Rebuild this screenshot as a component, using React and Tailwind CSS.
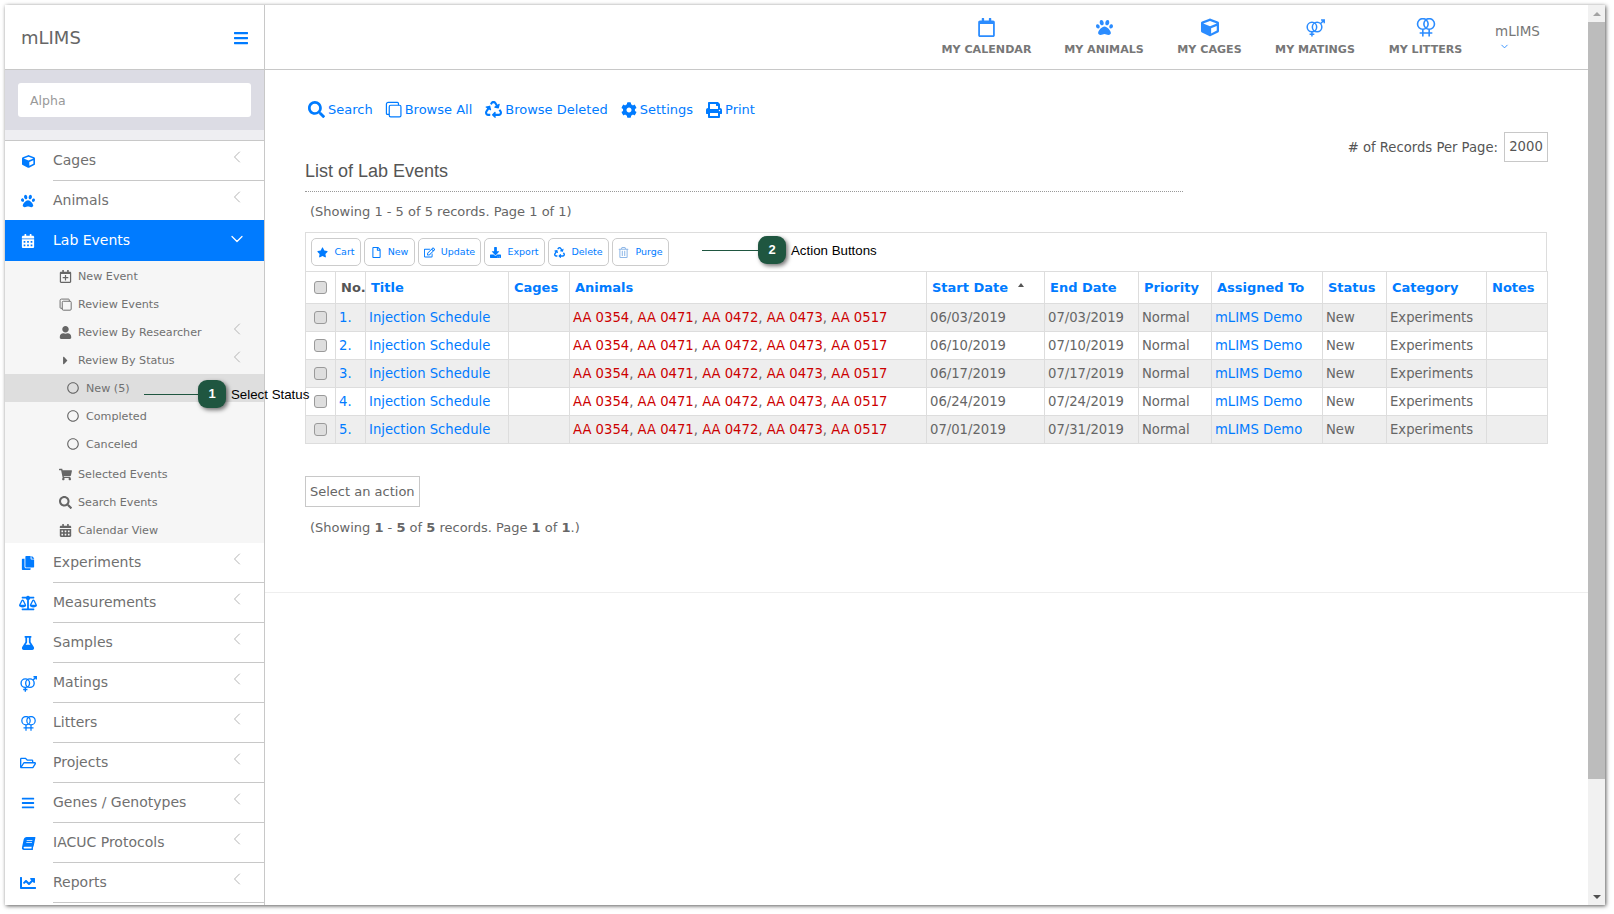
import React from 'react';
import { ChevronLeft, ChevronDown } from 'lucide-react';
import {
  FaBars, FaBalanceScale, FaBook, FaCalendarAlt, FaChartLine, FaCog, FaCopy, FaCube, FaDownload, FaFlask,
  FaPaw, FaPrint, FaRecycle, FaRegCalendar, FaRegCalendarPlus, FaRegCircle, FaRegEdit, FaRegFile,
  FaRegFolderOpen, FaRegTrashAlt, FaSearch, FaShoppingCart, FaStar, FaUser, FaCaretRight,
} from 'react-icons/fa';

const body = { fontFamily: '"DejaVu Sans", sans-serif' };
const arial = { fontFamily: '"Liberation Sans", sans-serif' };

// font-awesome 4 glyphs that the icon packages no longer carry in this shape
const MatingIcon = ({ size = 16, className }) => (
  <svg width={size} height={size} viewBox="0 0 24 24" fill="none" stroke="currentColor" strokeWidth="1.9" className={className}>
    <circle cx="7.5" cy="11.5" r="6" />
    <circle cx="14" cy="11.5" r="6" />
    <path d="M7.5 17.5V23.5M4.5 20.5H10.5M18.5 7L23 2.5M19 2.5H23V6.5" />
  </svg>
);

const LitterIcon = ({ size = 16, className }) => (
  <svg width={size} height={size} viewBox="0 0 24 24" fill="none" stroke="currentColor" strokeWidth="2" className={className}>
    <circle cx="8" cy="7.5" r="6.7" />
    <circle cx="16" cy="7.5" r="6.7" />
    <path d="M8 14.2V23.5M16 14.2V23.5M4 19H20" />
  </svg>
);

const FilesIcon = ({ size = 16, className }) => (
  <svg width={size} height={size} viewBox="0 0 24 24" fill="none" stroke="currentColor" strokeWidth="1.7" className={className}>
    <path d="M6 19H3.5A1.5 1.5 0 0 1 2 17.5V4.5A2.5 2.5 0 0 1 4.5 2H17.5A1.5 1.5 0 0 1 19 3.5V6" />
    <rect x="6" y="6" width="16.5" height="16.5" rx="2" />
  </svg>
);

const topNav = [
  { label: 'MY CALENDAR', icon: FaRegCalendar, w: 'w-[121px]', size: 19 },
  { label: 'MY ANIMALS', icon: FaPaw, w: 'w-[114px]', size: 17 },
  { label: 'MY CAGES', icon: FaCube, w: 'w-[97px]', size: 18 },
  { label: 'MY MATINGS', icon: MatingIcon, w: 'w-[114px]', size: 21 },
  { label: 'MY LITTERS', icon: LitterIcon, w: 'w-[107px]', size: 20 },
];

const navBefore = [
  { label: 'Cages', icon: FaCube, size: 13 },
  { label: 'Animals', icon: FaPaw, size: 14 },
];

const navAfter = [
  { label: 'Experiments', icon: FaCopy, size: 14 },
  { label: 'Measurements', icon: FaBalanceScale, size: 18 },
  { label: 'Samples', icon: FaFlask, size: 14 },
  { label: 'Matings', icon: MatingIcon, size: 17 },
  { label: 'Litters', icon: LitterIcon, size: 15 },
  { label: 'Projects', icon: FaRegFolderOpen, size: 16 },
  { label: 'Genes / Genotypes', icon: FaBars, size: 14 },
  { label: 'IACUC Protocols', icon: FaBook, size: 13, skew: true },
  { label: 'Reports', icon: FaChartLine, size: 16 },
];

const subItems = [
  { label: 'New Event', icon: FaRegCalendarPlus },
  { label: 'Review Events', icon: FilesIcon },
  { label: 'Review By Researcher', icon: FaUser, chevron: true },
  { label: 'Review By Status', icon: FaCaretRight, chevron: true },
  { label: 'New (5)', status: true, active: true },
  { label: 'Completed', status: true },
  { label: 'Canceled', status: true },
  { label: 'Selected Events', icon: FaShoppingCart, gapTop: true },
  { label: 'Search Events', icon: FaSearch },
  { label: 'Calendar View', icon: FaCalendarAlt },
];

const links = [
  { label: 'Search', icon: FaSearch, size: 17, mr: 'mr-[12px]' },
  { label: 'Browse All', icon: FilesIcon, size: 17, mr: 'mr-[13px]' },
  { label: 'Browse Deleted', icon: FaRecycle, size: 17, mr: 'mr-[13px]' },
  { label: 'Settings', icon: FaCog, size: 16, mr: 'mr-[13px]' },
  { label: 'Print', icon: FaPrint, size: 16, mr: '' },
];

const actions = [
  { label: 'Cart', icon: FaStar, w: 'w-[50px]' },
  { label: 'New', icon: FaRegFile, w: 'w-[51px]' },
  { label: 'Update', icon: FaRegEdit, w: 'w-[63px]' },
  { label: 'Export', icon: FaDownload, w: 'w-[61px]' },
  { label: 'Delete', icon: FaRecycle, w: 'w-[61px]' },
  { label: 'Purge', icon: FaRegTrashAlt, w: 'w-[57px]', muted: true },
];

const columns = [
  { label: 'Title', w: 'w-[143px]' },
  { label: 'Cages', w: 'w-[61px]' },
  { label: 'Animals', w: 'w-[357px]' },
  { label: 'Start Date', w: 'w-[118px]', sorted: true },
  { label: 'End Date', w: 'w-[94px]' },
  { label: 'Priority', w: 'w-[73px]' },
  { label: 'Assigned To', w: 'w-[111px]' },
  { label: 'Status', w: 'w-[64px]' },
  { label: 'Category', w: 'w-[100px]' },
  { label: 'Notes', w: 'w-[61px]' },
];

const animals = ['AA 0354', 'AA 0471', 'AA 0472', 'AA 0473', 'AA 0517'];

const events = [
  { start: '06/03/2019', end: '07/03/2019' },
  { start: '06/10/2019', end: '07/10/2019' },
  { start: '06/17/2019', end: '07/17/2019' },
  { start: '06/24/2019', end: '07/24/2019' },
  { start: '07/01/2019', end: '07/31/2019' },
];

const Check = () => (
  <input type="checkbox" readOnly className="block mx-auto appearance-none w-[13px] h-[13px] bg-[#dedede] border border-[#9a9a9a] rounded-[3px]" />
);

const NavRow = ({ label, icon: Icon, size, skew }) => (
  <div className="flex h-10 items-stretch">
    <div className="w-12 flex items-center justify-center pr-[2px] text-[#007bff]">
      <Icon size={size} className={skew ? '-skew-x-12' : ''} />
    </div>
    <div className="flex-1 flex items-center justify-between border-b border-[#c8c8c8] pr-[17px] text-[14px] text-[#707070]">
      <span>{label}</span>
      <ChevronLeft size={20} strokeWidth={1.2} className="text-[#b4b4b4] -mt-[7px]" />
    </div>
  </div>
);

const SubRow = ({ label, icon: Icon, status, active, chevron, gapTop }) => (
  <div className={`flex h-7 items-center text-[11.15px] text-[#707070] ${active ? 'bg-[#dedede]' : ''} ${gapTop ? 'mt-[2px]' : ''}`}>
    {status ? (
      <>
        <FaRegCircle size={12} className="ml-[62px] text-[#666]" />
        <span className="ml-[7px] pt-[3px]">{label}</span>
      </>
    ) : (
      <>
        <span className="ml-[50px] mr-[3px] w-[20px] flex justify-center text-[#666]">
          <Icon size={13} />
        </span>
        <span className="flex-1 pt-[2px]">{label}</span>
        {chevron && <ChevronLeft size={20} strokeWidth={1.2} className="text-[#b4b4b4] mr-[17px] -mt-[7px]" />}
      </>
    )}
  </div>
);

const Callout = ({ number, text, className, lineClass }) => (
  <div className={`absolute flex items-center ${className}`} style={arial}>
    <div className={`h-px bg-[#1f5640] ${lineClass}`} />
    <div className="w-[28px] h-[28px] rounded-[9px] bg-[#1f5640] text-white text-[13px] font-bold flex items-center justify-center shadow-[2px_2px_4px_rgba(0,0,0,0.55)]">
      {number}
    </div>
    <span className="ml-[5px] pt-px text-[13.3px] text-black whitespace-nowrap">{text}</span>
  </div>
);

export default function App() {
  return (
    <div className="relative h-[914px] w-[1614px] overflow-hidden bg-white pt-[5px] pl-[5px]" style={body}>
      <div className="flex h-[900px] w-[1600px] bg-white shadow-[1px_1px_4px_rgba(0,0,0,0.65)]">
        {/* sidebar */}
        <aside className="w-[260px] shrink-0 border-r border-[#c8c8c8] overflow-hidden">
          <div className="h-[65px] flex items-center justify-between pl-[16px] pr-[15px] border-b border-[#c8c8c8] bg-white">
            <span className="text-[18px] text-[#666]">mLIMS</span>
            <FaBars size={16} className="text-[#007bff] mt-[2px]" />
          </div>
          <div className="h-[60px] bg-[#dcdce4] px-[13px] pt-[13px]">
            <div className="h-[34px] rounded-[3px] bg-white flex items-center pl-[12px] pt-[2px] text-[12.5px] text-[#999]">Alpha</div>
          </div>
          <div className="h-[11px] bg-[#eeeef2] border-b border-[#c8c8c8]" />
          {navBefore.map((item) => <NavRow key={item.label} {...item} />)}
          <div className="h-[41px] -mt-px bg-[#007bff] flex items-center text-white relative">
            <div className="w-12 flex justify-center pr-[2px]"><FaCalendarAlt size={14} /></div>
            <span className="flex-1 text-[14px]">Lab Events</span>
            <ChevronDown size={20} strokeWidth={1.5} className="mr-[17px] -mt-[4px]" />
          </div>
          <div className="h-[282px] bg-[#f6f6f6] pt-px">
            {subItems.map((item) => <SubRow key={item.label} {...item} />)}
          </div>
          {navAfter.map((item) => <NavRow key={item.label} {...item} />)}
        </aside>

        {/* main column */}
        <div className="flex-1 flex flex-col min-w-0">
          <header className="h-[65px] shrink-0 border-b border-[#c8c8c8] flex justify-end items-start pr-[37px]">
            {topNav.map(({ label, icon: Icon, w, size }) => (
              <div key={label} className={`${w} flex flex-col items-center pt-[13px]`}>
                <Icon size={size} className="text-[#2b8cff] h-[19px]" />
                <span className="mt-[5px] text-[11.1px] font-bold text-[#777] whitespace-nowrap">{label}</span>
              </div>
            ))}
            <div className="w-[72px] pt-[17px] pl-[16px]">
              <div className="text-[13.5px] text-[#777] leading-[18px]">mLIMS</div>
              <ChevronDown size={11} className="text-[#2b8cff] ml-[4px] mt-[1px]" />
            </div>
          </header>

          <main className="flex-1">
            <div className="h-[523px] border-b border-[#eeeeee] pl-[40px] pr-[40px]">
              <div className="flex pl-[3px] pt-[30px] h-[56px] items-start">
                {links.map(({ label, icon: Icon, size, mr }) => (
                  <a key={label} className={`flex items-center gap-[3px] ${mr} text-[13px] text-[#007bff]`}>
                    <Icon size={size} />
                    <span>{label}</span>
                  </a>
                ))}
              </div>
              <div className="flex justify-between items-start">
                <h2 className="w-[878px] mt-[30px] h-[36px] text-[18px] text-[#555] leading-[30px] border-b border-dotted border-[#999]" style={arial}>List of Lab Events</h2>
                <div className="flex items-center h-[30px] mt-[6px] text-[13.2px] text-[#555]">
                  <span className="mr-[6px] pt-px">
                    # of Records Per Page:
                  </span>
                  <div className="w-[44px] h-[30px] border border-[#c8c8c8] flex items-center justify-center">2000</div>
                </div>
              </div>
              <p className="pl-[5px] mt-[11px] text-[13px] leading-[18px] text-[#666]">(Showing 1 - 5 of 5 records. Page 1 of 1)</p>

              <div className="mt-[11px] w-[1242px] border border-[#dddddd] border-b-0 h-[39px] flex items-center gap-[3px] pl-[5px]">
                {actions.map(({ label, icon: Icon, w, muted }) => (
                  <div key={label} className={`${w} h-[28px] rounded-[5px] border border-[#cccccc] flex items-center justify-center gap-[6px] text-[9.5px] text-[#007bff]`}>
                    <Icon size={11} className={muted ? 'text-[#8fb8e8]' : ''} />
                    <span>{label}</span>
                  </div>
                ))}
              </div>
              <table className="w-[1242px] table-fixed border-collapse text-[13.2px]">
                <thead>
                  <tr className="h-[32px] text-[13px]">
                    <th className="w-[30px] border border-[#dddddd]"><Check /></th>
                    <th className="w-[30px] border border-[#dddddd] pl-[5px] text-left font-bold text-[#555] whitespace-nowrap overflow-hidden">No.</th>
                    {columns.map(({ label, w, sorted }) => (
                      <th key={label} className={`${w} border border-[#dddddd] pl-[5px] text-left font-bold text-[#007bff] whitespace-nowrap`}>
                        {label}
                        {sorted && <span className="inline-block ml-[10px] mb-[5px] w-0 h-0 border-x-[3.5px] border-x-transparent border-b-[4px] border-b-[#555]" />}
                      </th>
                    ))}
                  </tr>
                </thead>
                <tbody>
                  {events.map((ev, i) => (
                    <tr key={ev.start} className={`h-[28px] ${i % 2 === 0 ? 'bg-[#eeeeee]' : 'bg-white'} text-[#666]`}>
                      <td className="border border-[#dddddd]"><Check /></td>
                      <td className="border border-[#dddddd] pl-[3px] text-[#007bff]">{i + 1}.</td>
                      <td className="border border-[#dddddd] pl-[3px] text-[#007bff] whitespace-nowrap">Injection Schedule</td>
                      <td className="border border-[#dddddd]" />
                      <td className="border border-[#dddddd] pl-[3px] whitespace-nowrap">
                        {animals.map((a, j) => (
                          <span key={a}><span className="text-[#cc0000]">{a}</span>{j < animals.length - 1 ? ', ' : ''}</span>
                        ))}
                      </td>
                      <td className="border border-[#dddddd] pl-[3px]">{ev.start}</td>
                      <td className="border border-[#dddddd] pl-[3px]">{ev.end}</td>
                      <td className="border border-[#dddddd] pl-[3px]">Normal</td>
                      <td className="border border-[#dddddd] pl-[3px] text-[#007bff] whitespace-nowrap">mLIMS Demo</td>
                      <td className="border border-[#dddddd] pl-[3px]">New</td>
                      <td className="border border-[#dddddd] pl-[3px]">Experiments</td>
                      <td className="border border-[#dddddd]" />
                    </tr>
                  ))}
                </tbody>
              </table>

              <div className="mt-[32px] w-[115px] h-[31px] border border-[#c8c8c8] flex items-center pl-[4px] text-[13px] text-[#666] whitespace-nowrap">Select an action</div>
              <p className="pl-[5px] mt-[12px] text-[13px] leading-[18px] text-[#666]">
                (Showing <b>1</b> - <b>5</b> of <b>5</b> records. Page <b>1</b> of <b>1</b>.)
              </p>
            </div>
          </main>
        </div>

        {/* browser scrollbar */}
        <div className="w-[17px] shrink-0 bg-[#f1f1f1] flex flex-col items-center">
          <div className="h-[17px] flex items-center justify-center">
            <div className="w-0 h-0 border-x-[4px] border-x-transparent border-b-[4px] border-b-[#a3a3a3]" />
          </div>
          <div className="w-full h-[757px] bg-[#bcbcbc]" />
          <div className="flex-1 flex items-end pb-[6px]">
            <div className="w-0 h-0 border-x-[4px] border-x-transparent border-t-[4px] border-t-[#505050]" />
          </div>
        </div>
      </div>

      {/* help callouts laid over the screenshot */}
      <Callout number="1" text="Select Status" className="left-[144px] top-[380px]" lineClass="w-[54px]" />
      <Callout number="2" text="Action Buttons" className="left-[702px] top-[236px]" lineClass="w-[56px]" />
    </div>
  );
}
